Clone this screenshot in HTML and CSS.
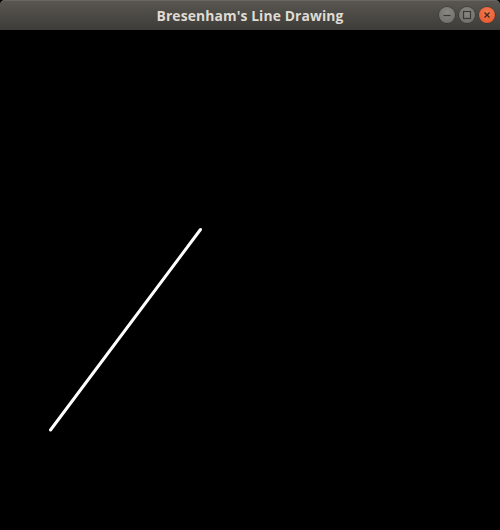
FILE: index.html
```html
<!DOCTYPE html>
<html>
<head>
<meta charset="utf-8">
<link rel="stylesheet" href="styles.css">
</head>
<body>
<div class="window">
  <div class="titlebar">
    <div class="title">Bresenham's Line Drawing</div>
    <div class="controls">
      <span class="btn">
        <svg width="16" height="16" viewBox="0 0 16 16"><line x1="4.5" y1="8.5" x2="11.5" y2="8.5" stroke="#3a3935" stroke-width="1.2"/></svg>
      </span>
      <span class="btn">
        <svg width="16" height="16" viewBox="0 0 16 16"><rect x="4.5" y="4.5" width="7" height="7" fill="none" stroke="#3a3935" stroke-width="1.2"/></svg>
      </span>
      <span class="btn close">
        <svg width="16" height="16" viewBox="0 0 16 16"><path d="M5.5 5.5 L10.5 10.5 M10.5 5.5 L5.5 10.5" stroke="#3a2a20" stroke-width="1.4"/></svg>
      </span>
    </div>
  </div>
  <div class="canvas">
    <svg class="drawing" width="500" height="500" viewBox="0 0 500 500">
      <line x1="50.5" y1="400" x2="200.5" y2="199.5" stroke="#ffffff" stroke-width="3" stroke-linecap="round"/>
    </svg>
  </div>
</div>
</body>
</html>
```

FILE: styles.css
```css
html, body {
  margin: 0;
  padding: 0;
  background: #000;
}
.window {
  width: 500px;
  height: 530px;
  display: flex;
  flex-direction: column;
}
.titlebar {
  height: 30px;
  flex: 0 0 30px;
  background: linear-gradient(#5a5752, #3d3c38);
  border-radius: 5px 5px 0 0;
  display: flex;
  align-items: center;
  justify-content: center;
  position: relative;
  box-shadow: inset 0 1px 0 #6a6761;
}
.title {
  font-family: "Open Sans", "DejaVu Sans", sans-serif;
  font-weight: 700;
  font-size: 13.9px;
  color: #dfdbd2;
  letter-spacing: 0.1px;
}
.controls {
  position: absolute;
  right: 5px;
  top: 7px;
  display: flex;
  gap: 4px;
}
.btn {
  width: 16px;
  height: 16px;
  border-radius: 50%;
  background: radial-gradient(circle at 50% 35%, #8a8883, #6b6964);
  box-shadow: 0 0 0 0.5px #2f2e2b;
  display: block;
}
.btn svg { display: block; }
.btn.close {
  background: radial-gradient(circle at 50% 35%, #f47a4f, #e5532a);
}
.canvas {
  flex: 1;
  background: #000;
}
.drawing { display: block; }
```
